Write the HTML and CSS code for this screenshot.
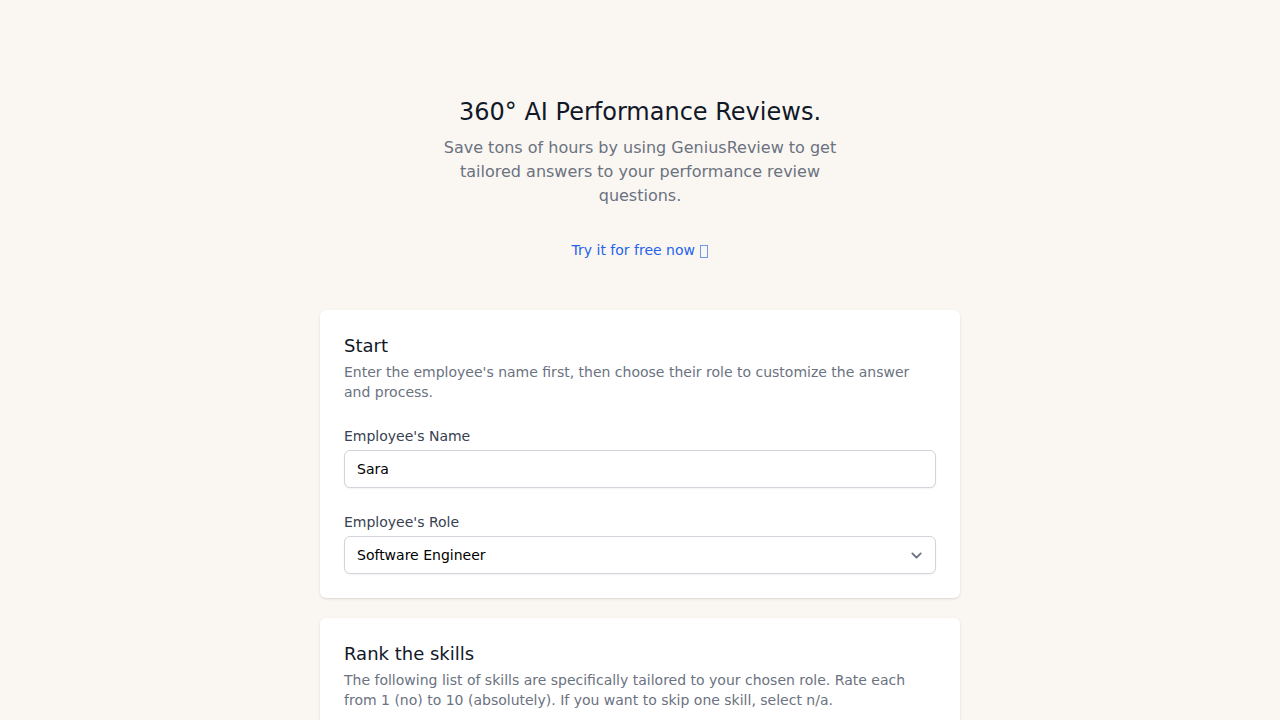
FILE: index.html
```html
<!DOCTYPE html>
<html lang="en">
<head>
<meta charset="utf-8">
<meta name="viewport" content="width=device-width, initial-scale=1">
<title>360° AI Performance Reviews</title>
<link rel="stylesheet" href="styles.css">
</head>
<body>
<main class="page">
  <header class="hero">
    <h1 class="hero-title">360° AI Performance Reviews.</h1>
    <p class="hero-text">Save tons of hours by using GeniusReview to get tailored answers to your performance review questions.</p>
    <a class="hero-link" href="#start">Try it for free now <span class="hero-glyph" aria-hidden="true"></span></a>
  </header>
  <form class="cards">
    <section class="card" id="start">
      <h2 class="card-title">Start</h2>
      <p class="card-text">Enter the employee's name first, then choose their role to customize the answer and process.</p>
      <div class="field">
        <label class="label" for="name">Employee's Name</label>
        <input class="control" id="name" type="text" value="Sara">
      </div>
      <div class="field">
        <label class="label" for="role">Employee's Role</label>
        <div class="select-wrap">
          <select class="control" id="role"><option>Software Engineer</option></select>
          <svg class="chevron" viewBox="0 0 20 20" fill="none" stroke="currentColor" stroke-width="1.8" stroke-linecap="round" stroke-linejoin="round" aria-hidden="true"><path d="M6 8l4 4 4-4"/></svg>
        </div>
      </div>
    </section>
    <section class="card">
      <h2 class="card-title">Rank the skills</h2>
      <p class="card-text">The following list of skills are specifically tailored to your chosen role. Rate each from 1 (no) to 10 (absolutely). If you want to skip one skill, select n/a.</p>
    </section>
  </form>
</main>
</body>
</html>
```
FILE: styles.css
```css
* { box-sizing: border-box; }

html { overflow: hidden; }

body {
  margin: 0;
  background: #faf7f2;
  color: #111827;
  font-family: "DejaVu Sans", sans-serif;
  font-size: 14px;
  line-height: 20px;
}

h1, h2, p { margin: 0; font-weight: 400; }

.page { padding: 96px 16px 24px; }

.hero {
  max-width: 400px;
  margin: 0 auto;
  text-align: center;
}

.hero-title { font-size: 24px; line-height: 32px; }

.hero-text {
  margin-top: 8px;
  color: #6b7280;
  font-size: 16px;
  line-height: 24px;
}

.hero-link {
  display: inline-block;
  margin-top: 32px;
  color: #2563eb;
  text-decoration: none;
}

.hero-glyph {
  display: inline-block;
  width: 8px;
  height: 13px;
  margin-left: 1px;
  border: 1px solid #6f97f0;
  vertical-align: -3px;
}

.cards {
  display: flex;
  flex-direction: column;
  gap: 20px;
  max-width: 640px;
  margin: 50px auto 0;
}

.card {
  padding: 24px;
  border-radius: 6px;
  background: #fff;
  box-shadow: 0 1px 3px rgb(0 0 0 / 10%), 0 1px 2px -1px rgb(0 0 0 / 10%);
}

.card-title { font-size: 18px; line-height: 24px; }

.card-text { margin-top: 4px; color: #6b7280; }

.field { margin-top: 24px; }

.label { display: block; margin-bottom: 4px; color: #374151; }

.control {
  display: block;
  width: 100%;
  height: 38px;
  padding: 8px 12px;
  border: 1px solid #d1d5db;
  border-radius: 6px;
  background: #fff;
  box-shadow: 0 1px 2px rgb(0 0 0 / 5%);
  color: #000;
  font: inherit;
  appearance: none;
}

.select-wrap { position: relative; }

.chevron {
  position: absolute;
  top: 9px;
  right: 9px;
  width: 21px;
  height: 21px;
  color: #6b7280;
  pointer-events: none;
}
```
